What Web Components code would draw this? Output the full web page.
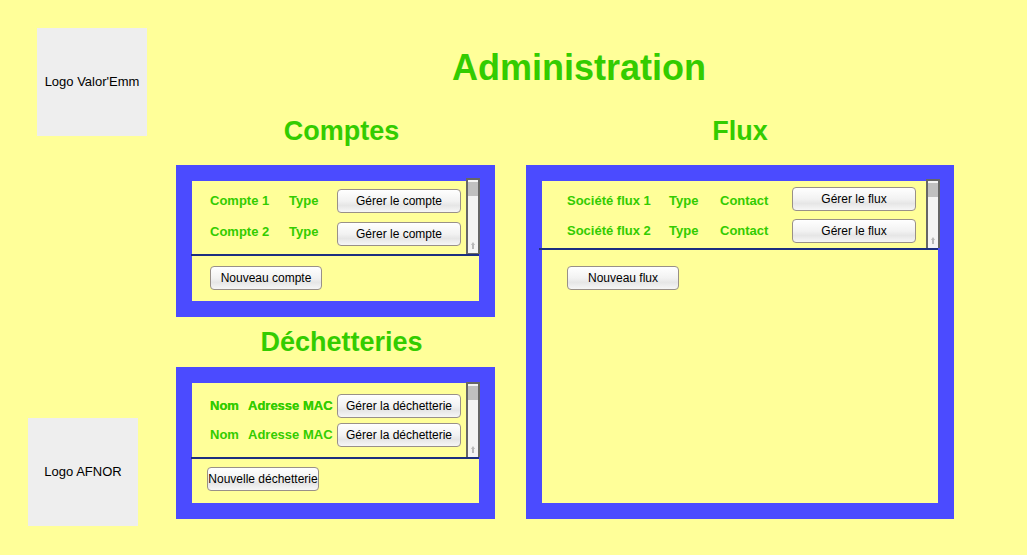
<!DOCTYPE html>
<html lang="fr">
<head>
<meta charset="utf-8">
<meta name="viewport" content="width=device-width, initial-scale=1">
<title>Administration</title>
<style>
  body {
    margin: 0;
    background: #ffff99;
    font-family: "Liberation Sans", Arial, sans-serif;
    font-size: 13px;
    color: #000;
  }
</style>
</head>
<body>
<admin-page></admin-page>

<template id="logo-box">
  <style>
    :host {
      display: flex;
      align-items: center;
      justify-content: center;
      width: 110px;
      height: 108px;
      background: #eee;
      line-height: 16px;
      white-space: nowrap;
    }
  </style>
  <slot></slot>
</template>

<template id="soft-button">
  <style>
    :host { display: block; width: var(--button-width, 112px); }
    button {
      display: block;
      box-sizing: border-box;
      width: 100%;
      height: 24px;
      padding: 0;
      border: 1px solid #999088;
      border-radius: 4px;
      background: linear-gradient(#fff 0%, #f2f2f2 50%, #e6e6e6 70%, #f6f6f6 100%);
      color: #000;
      font-family: inherit;
      font-size: 12px;
      line-height: 20px;
      white-space: nowrap;
    }
  </style>
  <button type="button"><slot></slot></button>
</template>

<template id="scroll-rail">
  <style>
    :host {
      display: flex;
      flex-direction: column;
      justify-content: space-between;
      align-items: center;
      box-sizing: border-box;
      width: 14px;
      border: 2px solid #666;
      border-bottom-width: var(--rail-bottom, 0);
      background: #f4f4f4;
    }
    .thumb { width: 100%; height: 14px; margin-top: 2px; background: #c0c0c0; }
    svg { display: block; margin-bottom: 4px; }
  </style>
  <div class="thumb"></div>
  <svg width="6" height="7" viewBox="0 0 6 7" aria-hidden="true">
    <path d="M3 0 5 3H4V7H2V3H1Z" fill="#b8b8b8"/>
  </svg>
</template>

<template id="row-table">
  <style>
    :host { display: block; }
    table { width: 100%; table-layout: fixed; border-collapse: collapse; }
    td { padding: 0; line-height: 20px; vertical-align: inherit; }
    tr { vertical-align: middle; }
    tr + tr td { padding-top: var(--row-gap, 8px); }
    tr.top { vertical-align: top; }
    tr.bottom { vertical-align: bottom; }
    tr.strong { text-shadow: 0 0 currentColor; }
    .label {
      color: #33cc00;
      font-weight: bold;
      white-space: nowrap;
    }
    soft-button { --button-width: 124px; }
  </style>
  <table><colgroup></colgroup><tbody></tbody></table>
</template>

<template id="list-panel">
  <style>
    :host { display: flex; flex-direction: column; }
    h2 {
      margin: 0 0 var(--heading-gap, 18px);
      padding-left: var(--heading-shift, 0);
      color: #33cc00;
      font-size: 27px;
      line-height: 32px;
      text-align: center;
    }
    .frame { flex: 1; border: 16px solid #4b4bff; }
    .list { position: relative; padding: var(--list-padding); }
    scroll-rail { position: absolute; top: var(--rail-top, -3px); right: var(--rail-right, -1px); bottom: 0; }
    hr {
      position: relative;
      height: 2px;
      margin: 0 0 0 var(--rule-start, -1px);
      border: 0;
      background: #1c2f80;
    }
    .action { padding: var(--action-padding); }
  </style>
  <h2></h2>
  <section class="frame">
    <div class="list"><slot name="list"></slot><scroll-rail></scroll-rail></div>
    <hr>
    <div class="action"><slot name="action"></slot></div>
  </section>
</template>

<template id="admin-page">
  <style>
    :host {
      display: grid;
      grid-template-columns: 176px minmax(0, 1fr);
      min-height: 100vh;
    }
    aside {
      display: flex;
      flex-direction: column;
      justify-content: space-between;
      padding: 28px 0 29px 28px;
    }
    .first { margin-left: 9px; }
    main { padding: 47px 73px 29px 0; }
    h1 {
      margin: 0 0 26px;
      padding-left: 28px;
      color: #33cc00;
      font-size: 36px;
      line-height: 42px;
      text-align: center;
    }
    .panels {
      display: grid;
      grid-template-columns: minmax(319px, 319fr) minmax(428px, 428fr);
      gap: 31px;
    }
    .stack { display: flex; flex-direction: column; gap: 9px; }
    .comptes {
      --heading-shift: 12px;
      --list-padding: 8px 18px;
      --action-padding: 10px 18px 11px;
      --row-gap: 9px;
      --rail-bottom: 1px;
    }
    .dechetteries {
      --heading-gap: 9px;
      --heading-shift: 12px;
      --list-padding: 11px 18px 10px;
      --action-padding: 8px 15px 12px;
      --row-gap: 5px;
      --rail-top: -1px;
    }
    .flux {
      --list-padding: 6px 22px 5px 25px;
      --action-padding: 16px 25px;
      --rule-start: -3px;
      --rail-top: -2px;
      --rail-right: -2px;
    }
  </style>
  <aside>
    <logo-box class="first">Logo Valor'Emm</logo-box>
    <logo-box>Logo AFNOR</logo-box>
  </aside>
  <main>
    <h1>Administration</h1>
    <div class="panels">
      <div class="stack">
        <list-panel class="comptes" heading="Comptes">
          <row-table slot="list" columns="79" action="Gérer le compte"
            rows="Compte 1|Type;Compte 2|Type" styles="middle;top"></row-table>
          <soft-button slot="action">Nouveau compte</soft-button>
        </list-panel>
        <list-panel class="dechetteries" heading="Déchetteries">
          <row-table slot="list" columns="38" action="Gérer la déchetterie"
            rows="Nom|Adresse MAC;Nom|Adresse MAC" styles="strong;middle"></row-table>
          <soft-button slot="action">Nouvelle déchetterie</soft-button>
        </list-panel>
      </div>
      <list-panel class="flux" heading="Flux">
        <row-table slot="list" columns="102,51" action="Gérer le flux"
          rows="Société flux 1|Type|Contact;Société flux 2|Type|Contact" styles="bottom;middle"></row-table>
        <soft-button slot="action">Nouveau flux</soft-button>
      </list-panel>
    </div>
  </main>
</template>

<script>
  class TemplateElement extends HTMLElement {
    constructor() {
      super();
      const template = document.getElementById(this.localName);
      this.attachShadow({ mode: "open" }).append(document.importNode(template.content, true));
    }
  }

  class LogoBox extends TemplateElement {}
  class SoftButton extends TemplateElement {}
  class ScrollRail extends TemplateElement {}
  class AdminPage extends TemplateElement {}

  class ListPanel extends TemplateElement {
    connectedCallback() {
      this.shadowRoot.querySelector("h2").textContent = this.getAttribute("heading");
    }
  }

  // Rows are separated by ";" and cells by "|"; every row ends with the action button.
  class RowTable extends TemplateElement {
    connectedCallback() {
      const body = this.shadowRoot.querySelector("tbody");
      const cols = this.shadowRoot.querySelector("colgroup");
      const styles = this.getAttribute("styles").split(";");
      const widths = this.getAttribute("columns").split(",").map(w => w + "px");
      cols.replaceChildren(...[...widths, "auto", "124px"].map(width => {
        const col = document.createElement("col");
        col.style.width = width;
        return col;
      }));
      body.replaceChildren(...this.getAttribute("rows").split(";").map((row, i) => {
        const tr = document.createElement("tr");
        tr.className = styles[i];
        for (const text of row.split("|")) {
          const td = tr.insertCell();
          td.className = "label";
          td.textContent = text;
        }
        const button = document.createElement("soft-button");
        button.textContent = this.getAttribute("action");
        tr.insertCell().append(button);
        return tr;
      }));
    }
  }

  customElements.define("logo-box", LogoBox);
  customElements.define("soft-button", SoftButton);
  customElements.define("scroll-rail", ScrollRail);
  customElements.define("row-table", RowTable);
  customElements.define("list-panel", ListPanel);
  customElements.define("admin-page", AdminPage);
</script>
</body>
</html>
